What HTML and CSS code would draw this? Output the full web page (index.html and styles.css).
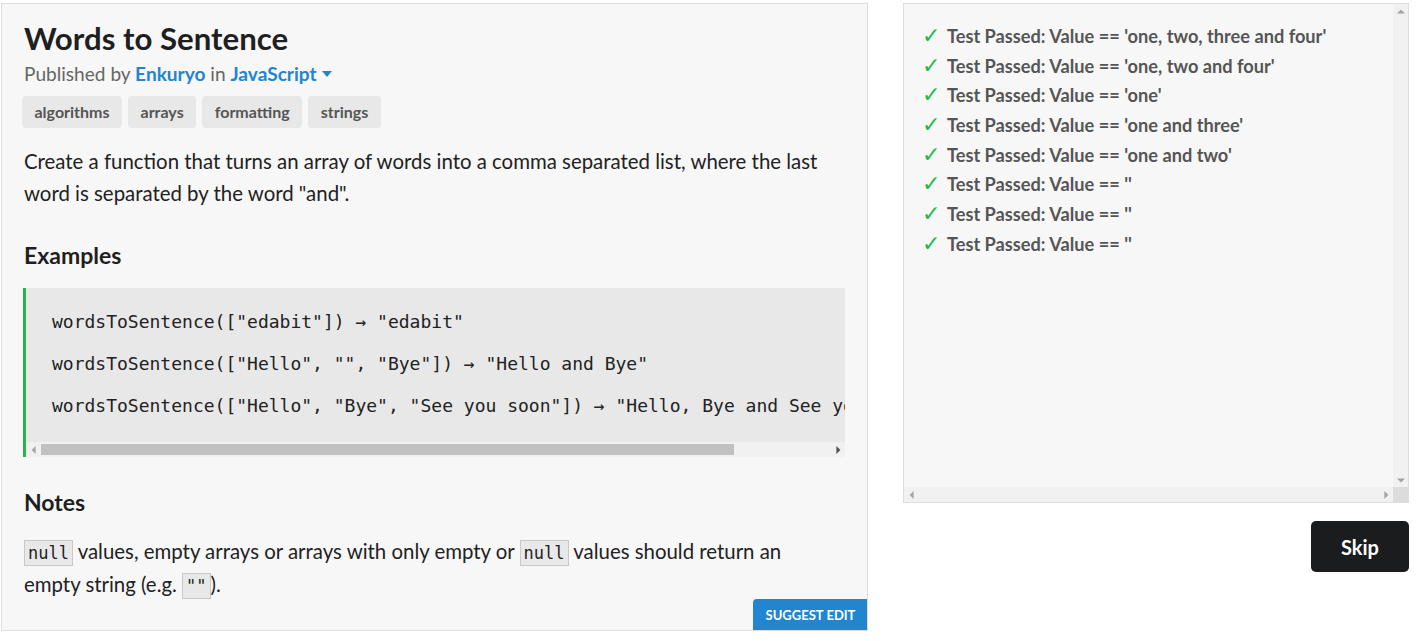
FILE: index.html
```html
<!DOCTYPE html>
<html>
<head>
<meta charset="utf-8">
<link rel="stylesheet" href="styles.css">
</head>
<body>
<div class="page">
  <div class="challenge">
    <h1 class="title">Words to Sentence</h1>
    <div class="meta">Published by <a class="link">Enkuryo</a> in <a class="link">JavaScript <span class="caret"></span></a></div>
    <div class="tags">
      <span class="tag">algorithms</span>
      <span class="tag">arrays</span>
      <span class="tag">formatting</span>
      <span class="tag">strings</span>
    </div>
    <p class="text">Create a function that turns an array of words into a comma separated list, where the last word is separated by the word "and".</p>
    <h3 class="heading">Examples</h3>
    <div class="codebox">
      <pre class="code">wordsToSentence(["edabit"]) → "edabit"
wordsToSentence(["Hello", "", "Bye"]) → "Hello and Bye"
wordsToSentence(["Hello", "Bye", "See you soon"]) → "Hello, Bye and See you soon"</pre>
      <div class="hbar">
        <span class="arr arr-left dim"></span>
        <div class="htrack"><div class="hthumb"></div></div>
        <span class="arr arr-right"></span>
      </div>
    </div>
    <h3 class="heading notes-h">Notes</h3>
    <p class="text notes"><code class="inline">null</code> values, empty arrays or arrays with only empty or <code class="inline">null</code> values should return an empty string (e.g. <code class="inline">""</code>).</p>
    <button class="suggest">SUGGEST EDIT</button>
  </div>
  <div class="side">
    <div class="results">
      <ul class="tests">
        <li><span class="check">✓</span>Test Passed: Value == 'one, two, three and four'</li>
        <li><span class="check">✓</span>Test Passed: Value == 'one, two and four'</li>
        <li><span class="check">✓</span>Test Passed: Value == 'one'</li>
        <li><span class="check">✓</span>Test Passed: Value == 'one and three'</li>
        <li><span class="check">✓</span>Test Passed: Value == 'one and two'</li>
        <li><span class="check">✓</span>Test Passed: Value == ''</li>
        <li><span class="check">✓</span>Test Passed: Value == ''</li>
        <li><span class="check">✓</span>Test Passed: Value == ''</li>
      </ul>
      <div class="vbar">
        <span class="arr arr-up dim"></span>
        <span class="arr arr-down dim"></span>
      </div>
      <div class="hbar2">
        <span class="arr arr-left dim"></span>
        <span class="arr arr-right dim"></span>
      </div>
      <div class="corner"></div>
    </div>
    <div class="actions">
      <button class="skip">Skip</button>
    </div>
  </div>
</div>
</body>
</html>
```

FILE: styles.css
```css
* { box-sizing: border-box; }
html, body { margin: 0; padding: 0; background: #fff; }
body {
  font-family: Lato, "Open Sans", sans-serif;
  color: #222;
}
.page {
  display: flex;
  align-items: flex-start;
  gap: 35px;
  padding: 3px 8px 0 1px;
}
.challenge {
  position: relative;
  width: 867px;
  height: 628px;
  flex: none;
  background: #f7f7f7;
  border: 1px solid #dedede;
  padding: 0 21px 0 21px;
  overflow: hidden;
}
.title {
  margin: 14px 0 0;
  font-size: 31.2px;
  line-height: 40px;
  font-weight: 700;
  color: #1f1f1f;
  padding-left: 1px;
}
.meta {
  font-size: 19.1px;
  line-height: 32px;
  color: #666;
  padding-left: 1px;
}
.link {
  color: #2185d0;
  font-weight: 700;
  text-decoration: none;
}
.caret {
  display: inline-block;
  width: 0; height: 0;
  border-left: 5px solid transparent;
  border-right: 5px solid transparent;
  border-top: 6px solid #2185d0;
  vertical-align: middle;
  margin-left: 1px;
  position: relative;
  top: -2px;
}
.tags {
  display: flex;
  gap: 6px;
  margin-top: 6px;
  margin-left: -1px;
}
.tag {
  background: #e8e8e8;
  color: #555;
  font-weight: 700;
  font-size: 16px;
  line-height: 32px;
  height: 32px;
  padding: 0 12.5px;
  border-radius: 4px;
}
.text {
  font-size: 20.4px;
  line-height: 32px;
  margin: 17px 0 0;
  color: #222;
  padding-left: 1px;
  padding-right: 18px;
}
.heading {
  font-size: 23px;
  line-height: 28px;
  font-weight: 700;
  margin: 32px 0 0;
  color: #1f1f1f;
  padding-left: 1px;
}
.codebox {
  margin-top: 19px;
  width: 822px;
  background: #e8e8e8;
  border-left: 3px solid #21ba45;
}
.code {
  margin: 0;
  font-family: "DejaVu Sans Mono", monospace;
  font-size: 18px;
  line-height: 42px;
  padding: 13px 26px 15px 26px;
  white-space: pre;
  overflow: hidden;
  color: #222;
}
.hbar {
  height: 15px;
  background: #f1f1f1;
  display: flex;
  align-items: center;
}
.htrack {
  flex: 1;
  height: 15px;
  padding: 2px 0;
}
.hthumb {
  width: 693px;
  height: 11px;
  background: #c1c1c1;
}
.arr {
  width: 15px;
  height: 15px;
  flex: none;
  position: relative;
  display: block;
}
.arr::after {
  content: "";
  position: absolute;
  left: 50%;
  top: 50%;
  width: 0;
  height: 0;
  border: 4px solid transparent;
}
.arr-left::after { border-right-color: #505050; border-left-width: 0; transform: translate(-60%, -50%); }
.arr-right::after { border-left-color: #505050; border-right-width: 0; transform: translate(-40%, -50%); }
.arr-up::after { border-bottom-color: #505050; border-top-width: 0; transform: translate(-50%, -60%); }
.arr-down::after { border-top-color: #505050; border-bottom-width: 0; transform: translate(-50%, -40%); }
.dim.arr-left::after { border-right-color: #a3a3a3; }
.dim.arr-right::after { border-left-color: #a3a3a3; }
.dim.arr-up::after { border-bottom-color: #a3a3a3; }
.dim.arr-down::after { border-top-color: #a3a3a3; }
.notes-h { margin-top: 31px; }
.notes {
  margin-top: 20px;
  line-height: 31px;
}
.inline {
  font-family: "DejaVu Sans Mono", monospace;
  font-size: 17px;
  background: #e8e8e8;
  border: 1px solid #c8c8c8;
  padding: 2px 3px;
}
.suggest {
  position: absolute;
  right: -1px;
  bottom: -1px;
  width: 115px;
  height: 32px;
  border: none;
  border-radius: 4px 0 0 0;
  background: #2185d0;
  color: #fff;
  font-family: Lato, sans-serif;
  font-weight: 700;
  font-size: 13px;
  padding: 0;
}
.side {
  width: 506px;
  flex: none;
  display: flex;
  flex-direction: column;
  align-items: stretch;
  gap: 18px;
}
.results {
  height: 500px;
  background: #f7f7f7;
  border: 1px solid #dedede;
  overflow: hidden;
  display: grid;
  grid-template-columns: 1fr 15px;
  grid-template-rows: 1fr 15px;
}
.vbar {
  background: #f1f1f1;
  display: flex;
  flex-direction: column;
  justify-content: space-between;
}
.hbar2 {
  background: #f1f1f1;
  display: flex;
  justify-content: space-between;
}
.corner { background: #dcdcdc; }
.tests {
  list-style: none;
  margin: 0;
  padding: 18px 0 0 18px;
  overflow: hidden;
}
.tests li {
  font-size: 18.2px;
  font-weight: 700;
  color: #555;
  line-height: 29.7px;
  height: 29.7px;
  white-space: nowrap;
}
.check {
  color: #21ba45;
  display: inline-block;
  width: 25px;
  font-size: 22px;
  font-family: "DejaVu Sans", sans-serif;
  font-weight: 400;
  vertical-align: top;
  line-height: 28px;
}
.actions {
  display: flex;
  justify-content: flex-end;
}
.skip {
  width: 98px;
  height: 51px;
  border: none;
  border-radius: 5px;
  background: #1b1c1d;
  color: #fff;
  font-family: Lato, sans-serif;
  font-weight: 700;
  font-size: 20px;
  padding: 0;
}
```
